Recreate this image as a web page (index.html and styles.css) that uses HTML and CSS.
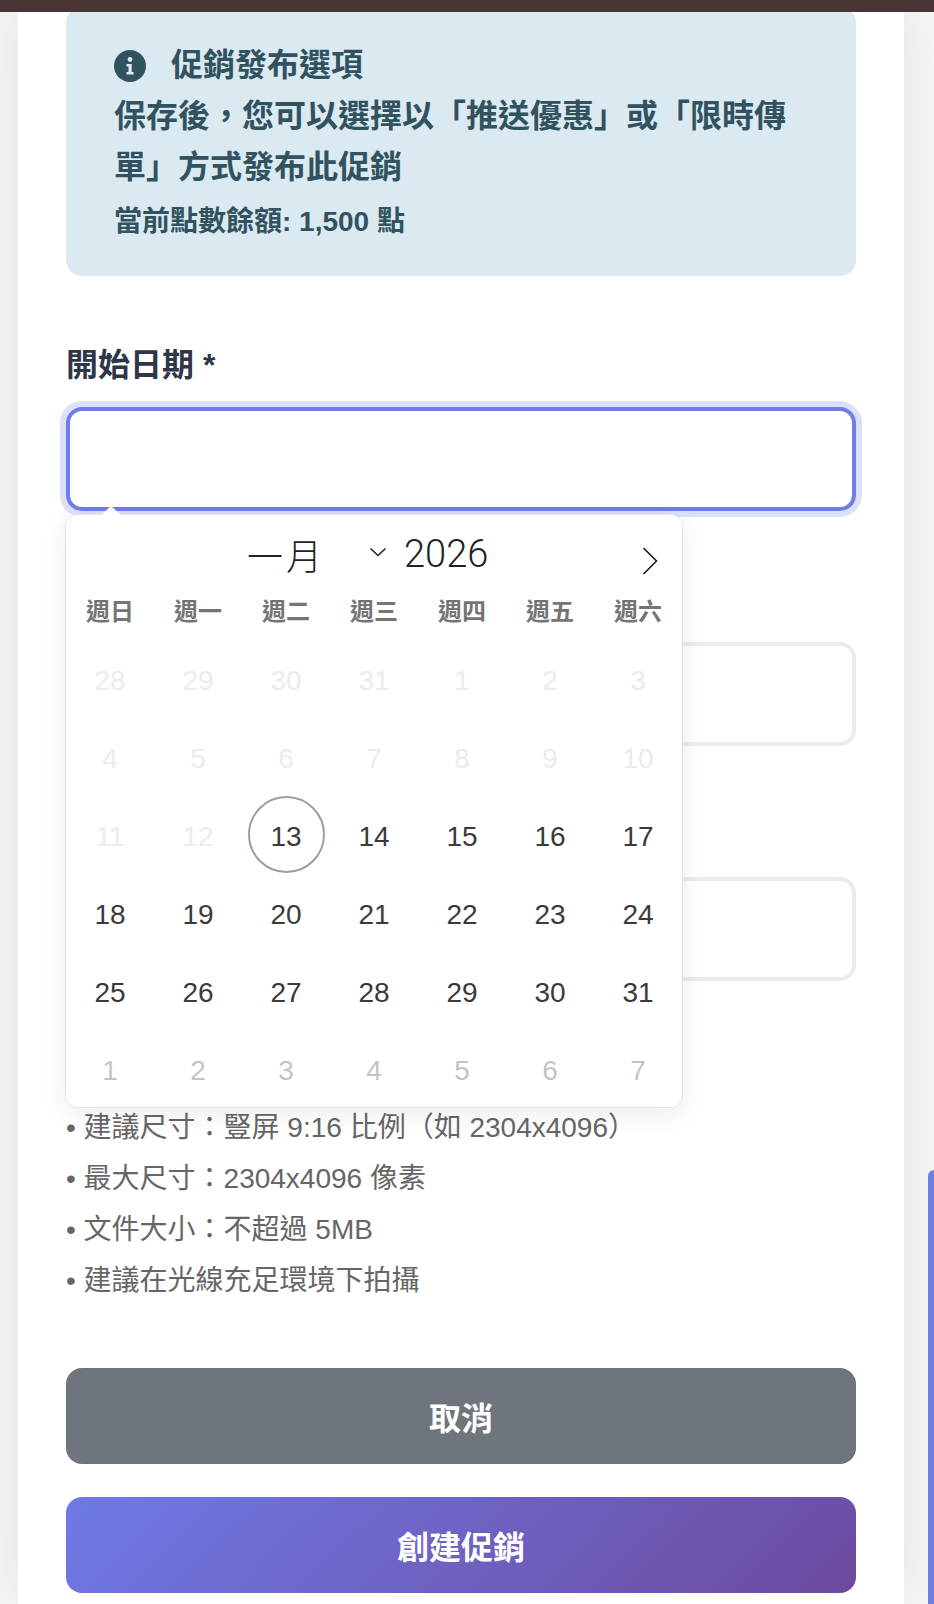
FILE: index.html
```html
<!DOCTYPE html>
<html lang="zh-Hant">
<head>
    <meta charset="UTF-8">
    <meta name="viewport" content="width=device-width, initial-scale=1.0">
    <title>創建促銷</title>
    <link rel="stylesheet" href="styles.css">
</head>
<body>
    <div class="top-bar"></div>
    <div class="side-tab"></div>

    <main class="form-card">
        <div class="info-box">
            <p class="info-title">
                <svg class="info-icon" viewBox="0 0 32 32">
                    <circle cx="16" cy="16" r="16" fill="#31525f"/>
                    <circle cx="16" cy="9.5" r="2.4" fill="#dbe9f1"/>
                    <path d="M12.5 14h5.2v8h1.8v2.4h-7V22h2v-5.6h-2z" fill="#dbe9f1"/>
                </svg>
                促銷發布選項
            </p>
            <p>保存後，您可以選擇以「推送優惠」或「限時傳單」方式發布此促銷</p>
            <p class="info-balance">當前點數餘額: 1,500 點</p>
        </div>

        <div class="form-group date-group">
            <label class="form-label">開始日期 *</label>
            <input type="text" class="form-input form-input-active" readonly>

            <div class="calendar">
                <div class="calendar-header">
                    <span class="calendar-month">一月</span>
                    <svg class="month-chevron" viewBox="0 0 18 10">
                        <path d="M1.5 1.5L9 8.5l7.5-7" fill="none" stroke="#222" stroke-width="1.6"/>
                    </svg>
                    <span class="calendar-year">2026</span>
                    <svg class="next-arrow" viewBox="0 0 16 28">
                        <path d="M1.5 1L14.5 14L1.5 27" fill="none" stroke="#111" stroke-width="1.5"/>
                    </svg>
                </div>
                <div class="calendar-weekdays">
                    <span>週日</span><span>週一</span><span>週二</span><span>週三</span><span>週四</span><span>週五</span><span>週六</span>
                </div>
                <div class="calendar-days">
                    <span class="day day-off">28</span><span class="day day-off">29</span><span class="day day-off">30</span><span class="day day-off">31</span><span class="day day-off">1</span><span class="day day-off">2</span><span class="day day-off">3</span>
                    <span class="day day-off">4</span><span class="day day-off">5</span><span class="day day-off">6</span><span class="day day-off">7</span><span class="day day-off">8</span><span class="day day-off">9</span><span class="day day-off">10</span>
                    <span class="day day-off">11</span><span class="day day-off">12</span><span class="day day-today">13</span><span class="day">14</span><span class="day">15</span><span class="day">16</span><span class="day">17</span>
                    <span class="day">18</span><span class="day">19</span><span class="day">20</span><span class="day">21</span><span class="day">22</span><span class="day">23</span><span class="day">24</span>
                    <span class="day">25</span><span class="day">26</span><span class="day">27</span><span class="day">28</span><span class="day">29</span><span class="day">30</span><span class="day">31</span>
                    <span class="day day-next">1</span><span class="day day-next">2</span><span class="day day-next">3</span><span class="day day-next">4</span><span class="day day-next">5</span><span class="day day-next">6</span><span class="day day-next">7</span>
                </div>
            </div>
        </div>

        <div class="form-group">
            <div class="label-space"></div>
            <input type="text" class="form-input" readonly>
        </div>

        <div class="form-group">
            <div class="label-space"></div>
            <input type="text" class="form-input" readonly>
        </div>

        <div class="upload-group">
            <ul class="hint-list">
                <li>• 建議尺寸：豎屏 9:16 比例（如 2304x4096）</li>
                <li>• 最大尺寸：2304x4096 像素</li>
                <li>• 文件大小：不超過 5MB</li>
                <li>• 建議在光線充足環境下拍攝</li>
            </ul>
        </div>

        <div class="form-actions">
            <button class="btn btn-cancel">取消</button>
            <button class="btn btn-submit">創建促銷</button>
        </div>
    </main>
</body>
</html>
```

FILE: styles.css
```css
* {
    box-sizing: border-box;
}

body {
    margin: 0;
    height: 1604px;
    overflow: hidden;
    font-family: "Liberation Sans", "Noto Sans CJK TC", sans-serif;
    background-color: #f7f7f7;
}

p {
    margin: 0;
}

.top-bar {
    position: absolute;
    top: 0;
    left: 0;
    right: 0;
    height: 12px;
    background-color: #4a3535;
    z-index: 5;
}

.side-tab {
    position: absolute;
    top: 1170px;
    right: 0;
    bottom: 0;
    width: 6px;
    background-color: #6e7de6;
    border-top-left-radius: 8px;
}

.form-card {
    width: 886px;
    margin-left: 18px;
    padding: 7px 48px 0;
    background-color: #fff;
    box-shadow: 0 0 60px rgba(0, 0, 0, 0.09);
    height: 1604px;
}

.info-box {
    padding: 32px 48px;
    background-color: #dbe9f1;
    color: #31525f;
    border-radius: 16px;
    font-size: 32px;
    font-weight: 700;
    line-height: 51.5px;
    margin-bottom: 64px;
}

.info-title {
    display: flex;
    align-items: center;
    margin-top: 1px;
    margin-bottom: -1px;
}

.info-icon {
    width: 32px;
    height: 32px;
    margin-right: 25px;
}

.info-balance {
    font-size: 28px;
    line-height: 45px;
    margin-top: 5px;
}

.form-group {
    margin-bottom: 64px;
}

.date-group {
    position: relative;
}

.form-label {
    display: block;
    font-size: 32px;
    font-weight: 700;
    line-height: 51px;
    color: #2d3748;
    margin-bottom: 16px;
}

.label-space {
    height: 67px;
}

.form-input {
    display: block;
    width: 100%;
    height: 104px;
    border: 4px solid #e9ecef;
    border-radius: 16px;
    background-color: #fff;
    outline: none;
}

.form-input-active {
    border-color: #6f7de8;
    box-shadow: 0 0 0 6px #dce0f9;
}

/* date picker, opens over the fields below */
.calendar {
    position: absolute;
    top: 174px;
    left: -1px;
    width: 618px;
    height: 594px;
    background-color: #fff;
    border: 1px solid #e3e3e3;
    border-radius: 12px;
    box-shadow: 0 6px 26px rgba(0, 0, 0, 0.08);
    z-index: 3;
}

.calendar::before {
    content: "";
    position: absolute;
    top: -9px;
    left: 35px;
    border-left: 10px solid transparent;
    border-right: 10px solid transparent;
    border-bottom: 9px solid #fff;
}

.calendar-header {
    position: relative;
    height: 67px;
    color: #222;
}

.calendar-month {
    position: absolute;
    top: 14px;
    left: 181px;
    font-size: 36px;
    font-weight: 300;
    line-height: 50px;
    letter-spacing: 3px;
    font-family: "Noto Sans CJK TC", sans-serif;
}

.month-chevron {
    position: absolute;
    top: 32px;
    left: 303px;
    width: 18px;
    height: 10px;
}

.calendar-year {
    position: absolute;
    top: 14px;
    left: 338px;
    font-family: Roboto, sans-serif;
    font-size: 38px;
    font-weight: 300;
    line-height: 50px;
}

.next-arrow {
    position: absolute;
    top: 32px;
    left: 576px;
    width: 16px;
    height: 28px;
}

.calendar-weekdays {
    display: grid;
    grid-template-columns: repeat(7, 88px);
    height: 58px;
    padding-bottom: 2px;
    align-items: center;
    text-align: center;
    font-size: 24px;
    font-weight: 700;
    color: #757575;
}

.calendar-days {
    display: grid;
    grid-template-columns: repeat(7, 88px);
    grid-auto-rows: 78px;
    justify-items: center;
    align-items: center;
}

.day {
    width: 77px;
    height: 77px;
    line-height: 82px;
    text-align: center;
    font-size: 28px;
    color: #3a3a3a;
    border-radius: 50%;
}

.day-off {
    color: #ececec;
}

.day-next {
    color: #c4c4c4;
}

.day-today {
    border: 2px solid #959ea9;
    line-height: 78px;
}

.upload-group {
    padding-top: 57px;
    margin-bottom: 62px;
}

.hint-list {
    list-style: none;
    margin: 0;
    padding: 0;
    font-size: 28px;
    line-height: 51px;
    color: #666;
}

.form-actions {
    display: flex;
    flex-direction: column;
    gap: 33px;
}

.btn {
    height: 96px;
    border: none;
    border-radius: 16px;
    color: #fff;
    font-family: inherit;
    font-size: 32px;
    font-weight: 700;
}

.btn-cancel {
    background-color: #6e757c;
}

.btn-submit {
    background: linear-gradient(135deg, #6f7ae6 0%, #6c4a9e 100%);
}
```
